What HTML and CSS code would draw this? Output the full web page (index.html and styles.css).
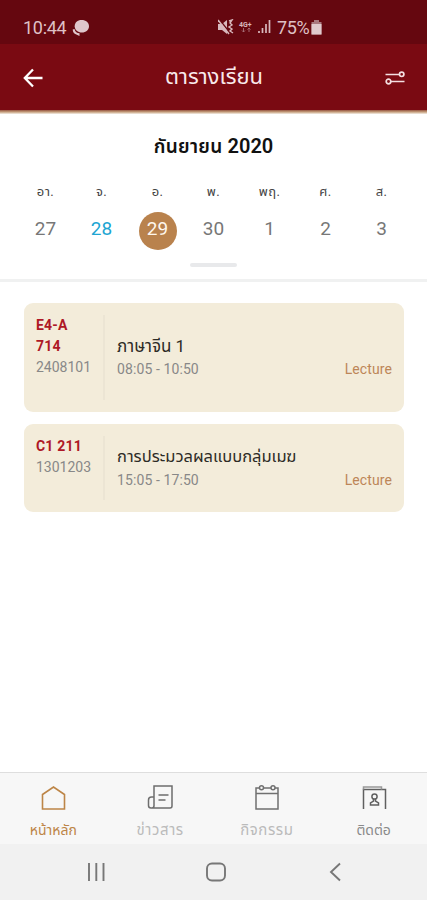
FILE: index.html
```html
<!DOCTYPE html>
<html lang="th">
<head>
<meta charset="utf-8">
<title>ตารางเรียน</title>
<link rel="stylesheet" href="styles.css">
</head>
<body>
<div class="app">
  <div class="status">
    <span class="clock">10:44</span>
    <svg class="chat" width="18" height="18" viewBox="0 0 18 18"><path d="M9.500 1C14 1 17 3.600 17 7.200S14 13.500 9.800 13.500C6 13.500 2.700 11 2.700 7.200S5.500 1 9.500 1Z" fill="#dfc6cb"/><path d="M.7 10.500L2.500 10C3.200 13 5 14.300 7.500 14.300V17L4.300 15.500C2 14.800.8 13 .7 10.500Z" fill="#dfc6cb"/></svg>
    <svg class="signals" width="54" height="17" viewBox="0 0 54 17">
      <path d="M0 5h4l5-4v14l-5-4H0Z" fill="#d8b8bd"/>
      <path d="M1 0l11 14" stroke="#65070f" stroke-width="1.500"/><path d="M0 1l11 14" stroke="#d8b8bd" stroke-width="1.500"/>
      <path d="M11 2l3-1-2 3 2 2-3 2 3 2-2 2 3 2" fill="none" stroke="#d8b8bd" stroke-width="1.400"/>
      <text x="21" y="7.500" class="net">4G+</text>
      <path d="M25.500 9v4m-1.500-1.500l1.500 1.500 1.500-1.500M31 13V9m-1.500 1.500L31 9l1.500 1.500" fill="none" stroke="#a8737a" stroke-width=".9"/>
      <path d="M41 14v-2M44.500 14V9M48 14V5M51.500 14V1" stroke="#d8b8bd" stroke-width="1.700"/>
    </svg>
    <span class="percent">75%</span>
    <svg class="battery" width="11" height="15" viewBox="0 0 11 15"><path d="M3 0h5v2h2.500v12.500H.5V2H3Z" fill="#a9787e"/><path d="M.5 4h10v10.500H.5Z" fill="#e0cacd"/></svg>
  </div>
  <header class="header">
    <svg class="back" width="20" height="20" viewBox="0 0 20 20"><path d="M10 1.500L1.800 10l8.200 8.500M2 10h17.500" fill="none" stroke="#fff" stroke-width="2.300"/></svg>
    <h1>ตารางเรียน</h1>
    <svg class="filter" width="20" height="14" viewBox="0 0 20 14"><g fill="none" stroke="#f4dfe1" stroke-width="1.700"><path d="M.5 3.500h14M6 10.500h13.500"/><circle cx="16.700" cy="3.300" r="2.200"/><circle cx="3.500" cy="10.500" r="2.300"/></g></svg>
  </header>
  <div class="rule"></div>
  <section class="calendar">
    <h2>กันยายน <span class="year">2020</span></h2>
    <div class="week">
      <div class="day"><span class="name">อา.</span><span class="num">27</span></div>
      <div class="day today"><span class="name">จ.</span><span class="num">28</span></div>
      <div class="day selected"><span class="name">อ.</span><span class="num">29</span></div>
      <div class="day"><span class="name">พ.</span><span class="num">30</span></div>
      <div class="day"><span class="name">พฤ.</span><span class="num">1</span></div>
      <div class="day"><span class="name">ศ.</span><span class="num">2</span></div>
      <div class="day"><span class="name">ส.</span><span class="num">3</span></div>
    </div>
    <div class="knob"></div>
  </section>
  <main class="list">
    <article class="card tall">
      <div class="room"><strong>E4-A<br>714</strong><span>2408101</span></div>
      <div class="info"><div class="course">ภาษาจีน 1</div><div class="meta"><span class="time">08:05 - 10:50</span><span class="kind">Lecture</span></div></div>
    </article>
    <article class="card">
      <div class="room"><strong>C1 211</strong><span>1301203</span></div>
      <div class="info"><div class="course long">การประมวลผลแบบกลุ่มเมฆ</div><div class="meta"><span class="time">15:05 - 17:50</span><span class="kind">Lecture</span></div></div>
    </article>
  </main>
  <nav class="tabs">
    <div class="tab home"><svg width="26" height="26" viewBox="0 0 26 26"><path d="M2.500 9.500L13.500 2l11 7.500V24h-22Z" fill="none" stroke="#bd8547" stroke-width="1.600"/></svg><span>หน้าหลัก</span></div>
    <div class="tab news"><svg width="26" height="26" viewBox="0 0 26 26"><g fill="none" stroke="#6e6e6e" stroke-width="1.500"><path d="M7 21V1h18v20q0 2-2 2H4q-2.500 0-2.500-2.500V15q0-3 3-3H7v8.500q0 2.500-2 2.500"/><path d="M11.500 10h10M11.500 15h7"/></g></svg><span>ข่าวสาร</span></div>
    <div class="tab events"><svg width="26" height="26" viewBox="0 0 26 26"><g fill="none" stroke="#707070" stroke-width="1.500"><path d="M5 3H2v21h22V3h-3M9 3h8M2 8.500h22"/><circle cx="7.500" cy="2.800" r="2"/><circle cx="19" cy="2.800" r="2"/></g></svg><span>กิจกรรม</span></div>
    <div class="tab contact"><svg width="26" height="26" viewBox="0 0 26 26"><g fill="none" stroke="#606060" stroke-width="1.500"><path d="M2.500 24V4.500h22V24"/><path d="M2.500 4.500V2h18v2.500" stroke="#999"/><circle cx="13.500" cy="11.500" r="2.600"/><path d="M12.500 14v2l-3 2v2h8v-2l-3-2v-2"/></g></svg><span>ติดต่อ</span></div>
  </nav>
  <div class="system">
    <svg width="20" height="20" viewBox="0 0 20 20"><path d="M3 1v18M10.300 1v18M17.500 1v18" stroke="#777" stroke-width="1.900"/></svg>
    <svg width="20" height="20" viewBox="0 0 20 20"><rect x="1" y="1.500" width="18" height="17" rx="5" fill="none" stroke="#777" stroke-width="1.900"/></svg>
    <svg width="20" height="20" viewBox="0 0 20 20"><path d="M15 1.500L6 10l9 8.500" fill="none" stroke="#777" stroke-width="1.900"/></svg>
  </div>
</div>
</body>
</html>
```
FILE: styles.css
```css
* { box-sizing: border-box; }
body { margin: 0; background: #fff; font-family: Roboto, "Noto Sans Thai", "Noto Sans", sans-serif; }
svg { display: block; flex: none; }
h1, h2 { margin: 0; }
.app { width: 427px; height: 900px; display: flex; flex-direction: column; overflow: hidden; }
.status { height: 44px; flex: none; background: #65070f; display: flex; align-items: center; padding: 11px 0 0 23px; color: #dfc0c5; font-size: 18px; line-height: 20px; }
.clock { width: 49px; letter-spacing: -.3px; }
.signals { margin-left: 128px; }
.net { font-size: 7px; font-weight: 700; fill: #d8b8bd; }
.percent { width: 34px; margin-left: 5px; letter-spacing: -.4px; white-space: nowrap; }
.header { height: 66px; flex: none; background: #7a0a12; display: flex; align-items: center; padding: 2px 22px 0 23px; }
.header h1 { flex: 1; text-align: center; color: #f9e9eb; font-size: 22px; font-weight: 400; line-height: 30px; padding-bottom: 2px; }
.rule { height: 4px; flex: none; background: linear-gradient(#955442, #c6a07d 50%, #f4eee6); }
.calendar { height: 168px; flex: none; display: flex; flex-direction: column; align-items: center; padding-top: 20px; border-bottom: 3px solid #f0f1f1; }
.calendar h2 { height: 24px; color: #111; font-size: 19px; line-height: 24px; font-weight: 600; letter-spacing: .3px; white-space: nowrap; }
.year { font-size: 20px; letter-spacing: 0; }
.week { display: grid; grid-template-columns: repeat(7, 56px); width: 392px; margin-top: 23px; height: 73px; }
.day { display: flex; flex-direction: column; align-items: center; }
.name { height: 21px; line-height: 21px; font-size: 13px; letter-spacing: .4px; color: #444; }
.num { width: 38px; height: 38px; margin-top: 10px; border-radius: 50%; text-align: center; font-size: 19px; line-height: 33px; color: #777; }
.today .num { color: #20a5d2; }
.selected .num { background: #b9824d; color: #fff7ed; }
.knob { width: 47px; height: 4px; margin-top: 9px; border-radius: 2px; background: #e8e9eb; }
.list { flex: 1; display: flex; flex-direction: column; gap: 12px; padding: 21px 23px 0 24px; }
.card { height: 88px; display: flex; padding: 12px; border-radius: 9px; background: #f3ecda; }
.card.tall { height: 109px; }
.room { width: 69px; display: flex; flex-direction: column; border-right: 2px solid #ece5d4; color: #888; font-size: 14px; line-height: 21px; }
.room strong { color: #ae1826; font-weight: 700; letter-spacing: .2px; }
.info { flex: 1; display: flex; flex-direction: column; justify-content: center; padding-left: 12px; }
.course { height: 24px; line-height: 22px; font-size: 17px; color: #2d2b26; white-space: nowrap; }
.long { font-size: 16.500px; }
.meta { display: flex; justify-content: space-between; height: 21px; line-height: 21px; font-size: 14px; color: #888; }
.time { letter-spacing: .1px; }
.kind { color: #bd8658; letter-spacing: .1px; }
.tabs { height: 72px; flex: none; display: grid; grid-template-columns: repeat(4, 1fr); background: #f7f7f7; border-top: 1px solid #dedede; }
.tab { display: flex; flex-direction: column; align-items: center; padding-top: 12px; font-size: 14px; color: #bbb; }
.tab span { margin-top: 8px; height: 22px; line-height: 22px; }
.home { color: #bd8547; }
.news, .events { font-size: 15px; }
.news span, .events span { letter-spacing: .6px; }
.contact { color: #8a8a8a; }
.system { height: 56px; flex: none; display: flex; justify-content: space-between; align-items: center; background: #f1f1f1; padding: 0 82px 0 86px; }
```
